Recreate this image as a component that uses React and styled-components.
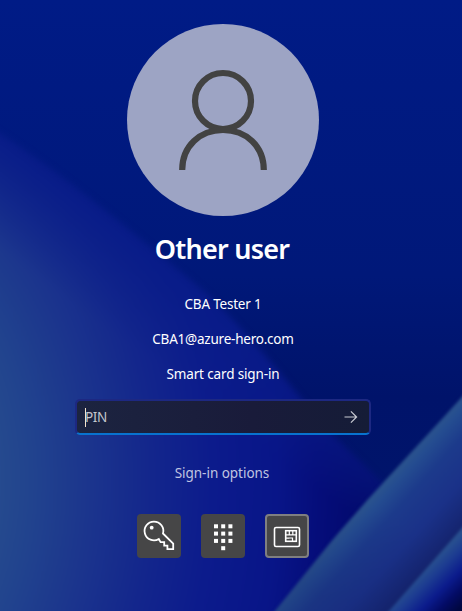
import React from "react";
import styled, { createGlobalStyle } from "styled-components";

const GlobalStyle = createGlobalStyle`
  * { box-sizing: border-box; }
  body { margin: 0; background: #001a84; }
`;

const Screen = styled.main`
  position: relative;
  width: 462px;
  height: 611px;
  overflow: hidden;
  font-family: "Noto Sans", "Open Sans", sans-serif;
  color: #fff;
`;

const WallpaperSvg = styled.svg`
  position: absolute;
  inset: 0;
  display: block;
`;

const Panel = styled.section`
  position: relative;
  display: flex;
  flex-direction: column;
  align-items: center;
  width: 296px;
  margin-left: 75px;
  padding-top: 24px;
`;

const Avatar = styled.div`
  width: 192px;
  height: 192px;
  border-radius: 50%;
  background: #9da4c4;
  overflow: hidden;

  svg { display: block; }
`;

const Title = styled.h1`
  margin: 13px 0 0;
  padding-right: 2px;
  font-size: 27px;
  line-height: 40px;
  font-weight: 600;
  letter-spacing: ${(p) => p.$tracking};
  white-space: nowrap;
`;

const Details = styled.div`
  display: flex;
  flex-direction: column;
  align-items: center;
  gap: 15px;
  margin-top: 25px;
`;

const Line = styled.p`
  margin: 0;
  font-size: 13.5px;
  line-height: 20px;
  letter-spacing: ${(p) => p.$tracking};
  white-space: nowrap;
`;

const PinField = styled.div`
  display: flex;
  align-items: center;
  justify-content: space-between;
  width: 296px;
  height: 36px;
  margin-top: 15px;
  padding: 0 11px 0 8px;
  border: 2px solid #1d2882;
  border-bottom: 2px solid #0873cf;
  border-radius: 5px;
  background: linear-gradient(90deg, #1c2440, #191b3a 60%, #151c37) padding-box;
`;

const Placeholder = styled.span`
  display: flex;
  align-items: center;
  color: #c5c7ce;
  font-size: 13.5px;
  line-height: 20px;
  letter-spacing: -0.4px;
`;

const Caret = styled.span`
  width: 1px;
  height: 19px;
  margin-right: -1px;
  background: #f4e4ce;
`;

const OptionsLabel = styled.p`
  margin: 28px 0 0;
  padding-right: 2px;
  font-size: 13.5px;
  line-height: 20px;
  letter-spacing: ${(p) => p.$tracking};
  color: #c0c5e1;
`;

const Options = styled.div`
  display: flex;
  gap: 20px;
  margin-top: 31px;
`;

const OptionButton = styled.button`
  display: block;
  width: 44px;
  height: 44px;
  padding: 0;
  border: 2px solid ${(p) => (p.$selected ? "#7f7f80" : "#464647")};
  border-radius: 4px;
  background: #464647;

  svg { display: block; margin: -2px; }
`;

function Wallpaper() {
  return (
    <WallpaperSvg width="462" height="611" viewBox="0 0 462 611" aria-hidden="true">
      <defs>
        <linearGradient id="sky" x1="0" y1="0" x2="0" y2="1">
          <stop offset="0" stopColor="#001b86" />
          <stop offset=".45" stopColor="#001879" />
          <stop offset=".65" stopColor="#00136a" />
          <stop offset="1" stopColor="#00166c" />
        </linearGradient>
        <radialGradient id="petal" gradientUnits="userSpaceOnUse" cx="-220" cy="480" r="600" gradientTransform="translate(-220 480) scale(1 1.15) translate(220 -480)">
          <stop offset=".34" stopColor="#274d8f" />
          <stop offset=".42" stopColor="#21438e" />
          <stop offset=".52" stopColor="#1b348d" />
          <stop offset=".62" stopColor="#13268c" />
          <stop offset=".72" stopColor="#0c1b8c" />
          <stop offset=".83" stopColor="#081588" />
          <stop offset=".9" stopColor="#050d7a" />
          <stop offset="1" stopColor="#010868" />
        </radialGradient>
        <linearGradient id="topShade" gradientUnits="userSpaceOnUse" x1="100" y1="200" x2="40" y2="280">
          <stop offset="0" stopColor="#071b88" />
          <stop offset="1" stopColor="#0b2088" stopOpacity="0" />
        </linearGradient>
        <linearGradient id="band" gradientUnits="userSpaceOnUse" x1="368" y1="498" x2="436" y2="559">
          <stop offset="0" stopColor="#2c558d" />
          <stop offset=".12" stopColor="#244c90" />
          <stop offset=".32" stopColor="#1c3a8b" />
          <stop offset=".65" stopColor="#1a3188" />
          <stop offset="1" stopColor="#14236d" />
        </linearGradient>
        <linearGradient id="bandShade" gradientUnits="userSpaceOnUse" x1="450" y1="430" x2="350" y2="611">
          <stop offset=".5" stopColor="#101c60" stopOpacity="0" />
          <stop offset="1" stopColor="#101c60" stopOpacity=".2" />
        </linearGradient>
        <linearGradient id="corner" gradientUnits="userSpaceOnUse" x1="425" y1="569" x2="462" y2="606">
          <stop offset="0" stopColor="#28508f" />
          <stop offset=".22" stopColor="#1c3b91" />
          <stop offset=".5" stopColor="#0b1b8c" />
          <stop offset=".75" stopColor="#030b65" />
          <stop offset="1" stopColor="#000740" />
        </linearGradient>
        <filter id="soft" x="-10%" y="-10%" width="120%" height="120%" colorInterpolationFilters="sRGB">
          <feGaussianBlur stdDeviation="1.5" />
        </filter>
        <filter id="softer" x="-10%" y="-10%" width="120%" height="120%" colorInterpolationFilters="sRGB">
          <feGaussianBlur stdDeviation="3" />
        </filter>
      </defs>
      <rect width="462" height="611" fill="url(#sky)" />
      <g filter="url(#softer)">
        <path d="M-40 110 L0 134 C60 172 140 238 200 288 C250 332 292 390 330 432 L390 490 L300 640 L-40 640Z" fill="url(#petal)" />
        <path d="M-40 110 L0 134 C60 172 140 238 200 288 C250 332 292 390 330 432 L390 490 L300 640 L-40 640Z" fill="url(#topShade)" />
      </g>
      <g filter="url(#soft)">
        <path d="M490 364 L462 397 C425 438 365 501 330 543 L275 611 L250 642 L490 642Z" fill="url(#band)" />
        <path d="M490 364 L462 397 C425 438 365 501 330 543 L275 611 L250 642 L490 642Z" fill="url(#bandShade)" />
        <path d="M490 497 L462 528 L389 611 L360 644 L490 644Z" fill="url(#corner)" />
      </g>
    </WallpaperSvg>
  );
}

function PersonIcon() {
  return (
    <svg width="192" height="192" viewBox="0 0 192 192" fill="none" stroke="#424242" strokeWidth="6.2">
      <circle cx="96" cy="77" r="28" />
      <path d="M55.2 146 C55.2 122 73 106 96 106 S136.8 122 136.8 146" />
    </svg>
  );
}

function ArrowIcon() {
  return (
    <svg width="14" height="14" viewBox="0 0 14 14" fill="none" stroke="#c9cbd3" strokeWidth="1.2">
      <path d="M.5 7 H12.5 M6.9 1.3 L12.6 7 L6.9 12.7" />
    </svg>
  );
}

function KeyIcon() {
  return (
    <svg width="44" height="44" viewBox="0 0 44 44" fill="none" stroke="#fff" strokeWidth="1.8">
      <path d="M26 19.5 L36.2 29.6 V35.2 H30.4 V31.7 H27.2 V28.2 H23.6 L21.8 25 A9.4 9.4 0 1 1 26 19.5Z" />
      <circle cx="14.7" cy="13.7" r="1.9" fill="#fff" stroke="none" />
    </svg>
  );
}

function KeypadIcon() {
  const dots = [[0, 0], [1, 0], [2, 0], [0, 1], [1, 1], [2, 1], [0, 2], [1, 2], [2, 2], [1, 3]];
  return (
    <svg width="44" height="44" viewBox="0 0 44 44" fill="#fff">
      {dots.map(([x, y]) => (
        <rect key={`${x}-${y}`} x={13 + x * 7.2} y={10.3 + y * 7.3} width="4" height="4" />
      ))}
    </svg>
  );
}

function SmartCardIcon() {
  return (
    <svg width="44" height="44" viewBox="0 0 44 44" fill="none" stroke="#fff" strokeWidth="1.6">
      <rect x="9.5" y="13.5" width="25" height="19" rx="1.5" />
      <rect x="20.7" y="16.7" width="10.6" height="10.6" />
      <path d="M21 20.8 H31 M24.3 17 V20.5 M27.8 17 V20.5 M21 24.2 H24.3 M27.5 27 V24 H24.3" strokeWidth="1.2" />
    </svg>
  );
}

export default function App() {
  return (
    <>
      <GlobalStyle />
      <Screen>
        <Wallpaper />
        <Panel>
          <Avatar><PersonIcon /></Avatar>
          <Title $tracking="-0.75px">Other user</Title>
          <Details>
            <Line $tracking="-0.2px">CBA Tester 1</Line>
            <Line $tracking="-0.22px">CBA1@azure-hero.com</Line>
            <Line $tracking="-0.14px">Smart card sign-in</Line>
          </Details>
          <PinField>
            <Placeholder><Caret />PIN</Placeholder>
            <ArrowIcon />
          </PinField>
          <OptionsLabel $tracking="-0.03px">Sign-in options</OptionsLabel>
          <Options>
            <OptionButton aria-label="Security key"><KeyIcon /></OptionButton>
            <OptionButton aria-label="PIN"><KeypadIcon /></OptionButton>
            <OptionButton aria-label="Smart card" $selected><SmartCardIcon /></OptionButton>
          </Options>
        </Panel>
      </Screen>
    </>
  );
}
